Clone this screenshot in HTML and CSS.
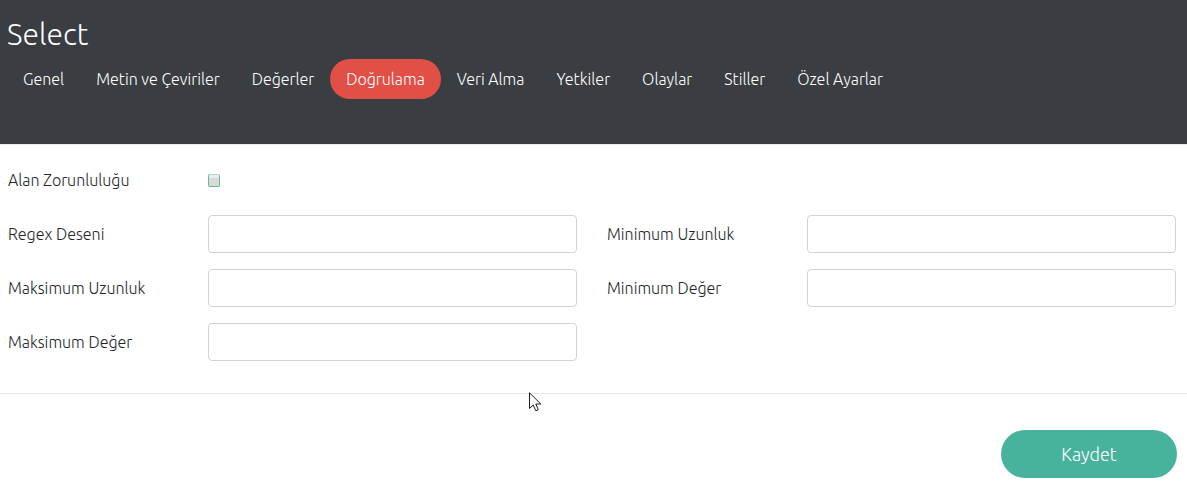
FILE: index.html
```html
<!DOCTYPE html>
<html lang="tr">
<head>
<meta charset="utf-8">
<meta name="viewport" content="width=device-width, initial-scale=1">
<title>Select</title>
<link rel="stylesheet" href="styles.css">
</head>
<body>
<header class="header">
  <h1 class="title">Select</h1>
  <nav class="tabs">
    <a class="tab" href="#genel">Genel</a>
    <a class="tab" href="#metin">Metin ve Çeviriler</a>
    <a class="tab" href="#degerler">Değerler</a>
    <a class="tab active" href="#dogrulama" aria-current="page">Doğrulama</a>
    <a class="tab" href="#veri">Veri Alma</a>
    <a class="tab" href="#yetkiler">Yetkiler</a>
    <a class="tab" href="#olaylar">Olaylar</a>
    <a class="tab" href="#stiller">Stiller</a>
    <a class="tab" href="#ozel">Özel Ayarlar</a>
  </nav>
</header>
<form>
  <div class="fields">
    <div class="field wide">
      <label for="required">Alan Zorunluluğu</label>
      <input class="check" type="checkbox" id="required">
    </div>
    <div class="field">
      <label for="regex">Regex Deseni</label>
      <input class="text" type="text" id="regex">
    </div>
    <div class="field">
      <label for="minlen">Minimum Uzunluk</label>
      <input class="text" type="text" id="minlen">
    </div>
    <div class="field">
      <label for="maxlen">Maksimum Uzunluk</label>
      <input class="text" type="text" id="maxlen">
    </div>
    <div class="field">
      <label for="minval">Minimum Değer</label>
      <input class="text" type="text" id="minval">
    </div>
    <div class="field">
      <label for="maxval">Maksimum Değer</label>
      <input class="text" type="text" id="maxval">
    </div>
  </div>
  <div class="footer">
    <button class="save" type="button">Kaydet</button>
  </div>
</form>
<svg class="pointer" width="13" height="20" viewBox="0 0 13 20" aria-hidden="true">
  <path d="M.5.8V16.5L4.2 13L6.8 18.8L9.3 17.7L6.8 12H11.8Z" fill="#fff" stroke="#1b1d2b"/>
</svg>
</body>
</html>
```
FILE: styles.css
```css
* {
  box-sizing: border-box;
}

body {
  margin: 0;
  background: #fff;
  color: #212529;
  font: 300 16px/24px Ubuntu, "Noto Sans", sans-serif;
}

.header {
  padding: 16px 7px 45px;
  background: #3a3d42;
  border-bottom: 1px solid #e9ecef;
  color: #fff;
}

.title {
  margin: 0 0 7px;
  font-size: 30px;
  font-weight: 300;
  line-height: 36px;
}

.tabs {
  display: flex;
  flex-wrap: wrap;
}

.tab {
  padding: 8px 16px;
  border-radius: 20px;
  color: #fff;
  text-decoration: none;
}

.tab.active {
  background: #e14f46;
}

.fields {
  display: grid;
  grid-template-columns: 1fr 1fr;
  gap: 16px 30px;
  padding: 16px 11px 32px 8px;
}

.field {
  display: grid;
  grid-template-columns: 200px minmax(0, 1fr);
  align-items: center;
  min-height: 38px;
}

.wide {
  grid-column: 1 / -1;
}

.text {
  width: 100%;
  height: 38px;
  padding: 6px 12px;
  border: 1px solid #ced4da;
  border-radius: 4px;
  background: #fff;
  font: inherit;
}

.check {
  appearance: none;
  width: 12px;
  height: 13px;
  margin: 0;
  border: 1px solid #62b9a6;
  border-top-color: #b5d4d5;
  border-radius: 2px;
  background: linear-gradient(#e8eeee 3px, #dadad5 3px);
}

.check:checked {
  background: #48b39d;
}

.footer {
  display: flex;
  justify-content: flex-end;
  padding: 36px 10px 15px;
  border-top: 1px solid #e9e9e9;
}

.save {
  min-width: 176px;
  height: 48px;
  border: 0;
  border-radius: 24px;
  background: #48b39d;
  color: #fff;
  font: inherit;
  font-size: 18px;
}

.pointer {
  position: absolute;
  left: 529px;
  top: 392px;
  pointer-events: none;
}
```
